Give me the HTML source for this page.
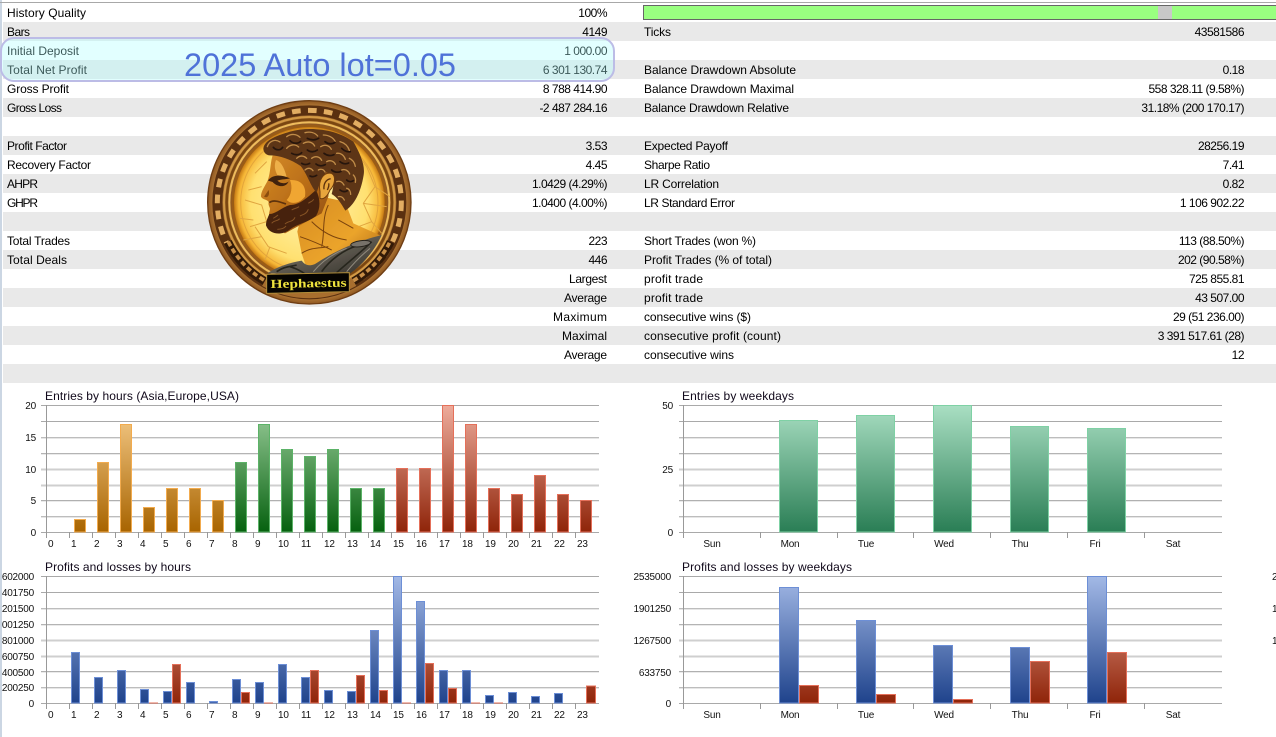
<!DOCTYPE html>
<html><head><meta charset="utf-8"><style>
html,body{margin:0;padding:0;background:#fff;width:1276px;height:737px;overflow:hidden}
svg{display:block}
.t text{font:12px "Liberation Sans",sans-serif;fill:#000}
.t .r{text-anchor:end}
.t .n{text-anchor:end;letter-spacing:-.5px}
.c text{font:10px "Liberation Sans",sans-serif;fill:#111;letter-spacing:-.2px}
.c .y{text-anchor:end}
.c .m{text-anchor:middle}
.c .h{font-size:12px;fill:#10081a;letter-spacing:0}
</style></head><body>
<svg width="1276" height="737" viewBox="0 0 1276 737" xmlns="http://www.w3.org/2000/svg">
<defs>
<linearGradient id="go" gradientUnits="userSpaceOnUse" x1="0" y1="532" x2="0" y2="405"><stop offset="0" stop-color="#a86400"/><stop offset="1" stop-color="#f9cf8e"/></linearGradient>
<linearGradient id="gg" gradientUnits="userSpaceOnUse" x1="0" y1="532" x2="0" y2="405"><stop offset="0" stop-color="#06610f"/><stop offset="1" stop-color="#9dcf9d"/></linearGradient>
<linearGradient id="gr" gradientUnits="userSpaceOnUse" x1="0" y1="532" x2="0" y2="405"><stop offset="0" stop-color="#8f2409"/><stop offset="1" stop-color="#eeac9c"/></linearGradient>
<linearGradient id="gw" gradientUnits="userSpaceOnUse" x1="0" y1="532" x2="0" y2="405"><stop offset="0" stop-color="#2a7e55"/><stop offset="1" stop-color="#aadfc3"/></linearGradient>
<linearGradient id="gb" gradientUnits="userSpaceOnUse" x1="0" y1="703" x2="0" y2="576"><stop offset="0" stop-color="#1f438c"/><stop offset="1" stop-color="#a3b9e6"/></linearGradient>
<linearGradient id="gd" gradientUnits="userSpaceOnUse" x1="0" y1="703" x2="0" y2="576"><stop offset="0" stop-color="#8f2409"/><stop offset="1" stop-color="#eeac9c"/></linearGradient>
<radialGradient id="disc" cx="0.5" cy="0.5" r="0.5"><stop offset="0" stop-color="#fff6b4"/><stop offset=".78" stop-color="#ffe070"/><stop offset=".94" stop-color="#f6b636"/><stop offset="1" stop-color="#c67a14"/></radialGradient>
<radialGradient id="rim" cx="0.5" cy="0.5" r="0.5"><stop offset=".75" stop-color="#8c5520"/><stop offset=".93" stop-color="#b9803c"/><stop offset="1" stop-color="#8f5720"/></radialGradient>
<linearGradient id="skin" x1="0" y1="0" x2="1" y2="1"><stop offset="0" stop-color="#d9902c"/><stop offset=".55" stop-color="#b86c16"/><stop offset="1" stop-color="#8a4a0e"/></linearGradient>
<linearGradient id="neck" x1="0" y1="0" x2="1" y2="1"><stop offset="0" stop-color="#d58a20"/><stop offset=".6" stop-color="#eba42c"/><stop offset="1" stop-color="#a8620f"/></linearGradient>
<linearGradient id="toga" x1="0" y1="0" x2="1" y2="1"><stop offset="0" stop-color="#77726a"/><stop offset=".5" stop-color="#5f5a50"/><stop offset="1" stop-color="#33302a"/></linearGradient>
<filter id="soft" x="-5%" y="-5%" width="110%" height="110%"><feGaussianBlur stdDeviation="1"/></filter>
<g id="grid" fill="none">
<path d="M0 .5H558" stroke="#a9a9a9"/>
<path d="M0 16.5H558" stroke="#a9a9a9"/>
<path d="M0 32.5H558" stroke="#bdbdbd"/><path d="M0 33.5H558" stroke="#e6e6e6"/>
<path d="M0 48.5H558" stroke="#b4b4b4"/><path d="M0 49.5H558" stroke="#eaeaea"/>
<path d="M0 64.5H558" stroke="#cfcfcf" stroke-width="2"/>
<path d="M0 80.5H558" stroke="#cfcfcf" stroke-width="2"/>
<path d="M0 95.5H558" stroke="#b0b0b0"/><path d="M0 96.5H558" stroke="#eaeaea"/>
<path d="M0 111.5H558" stroke="#bdbdbd"/><path d="M0 112.5H558" stroke="#e6e6e6"/>
<path d="M0 127.5H558" stroke="#a9a9a9"/>
</g>
<g id="gridw" fill="none">
<path d="M0 .5H543" stroke="#a9a9a9"/>
<path d="M0 16.5H543" stroke="#a9a9a9"/>
<path d="M0 32.5H543" stroke="#bdbdbd"/><path d="M0 33.5H543" stroke="#e6e6e6"/>
<path d="M0 48.5H543" stroke="#b4b4b4"/><path d="M0 49.5H543" stroke="#eaeaea"/>
<path d="M0 64.5H543" stroke="#cfcfcf" stroke-width="2"/>
<path d="M0 80.5H543" stroke="#cfcfcf" stroke-width="2"/>
<path d="M0 95.5H543" stroke="#b0b0b0"/><path d="M0 96.5H543" stroke="#eaeaea"/>
<path d="M0 111.5H543" stroke="#bdbdbd"/><path d="M0 112.5H543" stroke="#e6e6e6"/>
<path d="M0 127.5H543" stroke="#a9a9a9"/>
</g>
<path id="th" fill="none" stroke="#999" d="M5.5 127v6M28.5 127v6M51.5 127v6M74.5 127v6M97.5 127v6M120.5 127v6M143.5 127v6M166.5 127v6M189.5 127v6M212.5 127v6M235.5 127v6M258.5 127v6M281.5 127v6M304.5 127v6M327.5 127v6M350.5 127v6M373.5 127v6M396.5 127v6M419.5 127v6M442.5 127v6M465.5 127v6M488.5 127v6M511.5 127v6M534.5 127v6M5.5 0V127"/>
<path id="tw" fill="none" stroke="#999" d="M5.5 127v6M82.5 127v6M159.5 127v6M235.5 127v6M312.5 127v6M389.5 127v6M466.5 127v6M5.5 0V127"/>
</defs>

<rect width="1276" height="737" fill="#fff"/>
<g fill="#e9e9e9">
<rect x="3" y="22" width="1273" height="19"/><rect x="3" y="60" width="1273" height="19"/><rect x="3" y="98" width="1273" height="19"/><rect x="3" y="136" width="1273" height="19"/><rect x="3" y="174" width="1273" height="19"/><rect x="3" y="212" width="1273" height="19"/><rect x="3" y="250" width="1273" height="19"/><rect x="3" y="288" width="1273" height="19"/><rect x="3" y="326" width="1273" height="19"/><rect x="3" y="364" width="1273" height="19"/>
</g>
<rect x="0" y="0" width="2" height="737" fill="#cbd6e3"/>
<rect x="0" y="2" width="1276" height="1" fill="#a8a8a8"/>
<rect x="643.500" y="5.500" width="640" height="14" fill="#99ff80" stroke="#666"/>
<rect x="1158" y="6" width="14" height="13" fill="#c8c8c8"/>

<g class="t">
<text x="7" y="17" textLength="79">History Quality</text><text class="n" x="607" y="17">100%</text>
<text x="7" y="36" textLength="23">Bars</text><text class="n" x="607" y="36">4149</text><text x="644" y="36" textLength="27">Ticks</text><text class="n" x="1244" y="36">43581586</text>
<text x="7" y="55" textLength="72">Initial Deposit</text><text class="n" x="607" y="55">1 000.00</text>
<text x="7" y="74" textLength="80">Total Net Profit</text><text class="n" x="607" y="74">6 301 130.74</text><text x="644" y="74" textLength="152">Balance Drawdown Absolute</text><text class="n" x="1244" y="74">0.18</text>
<text x="7" y="93" textLength="62">Gross Profit</text><text class="n" x="607" y="93">8 788 414.90</text><text x="644" y="93" textLength="150">Balance Drawdown Maximal</text><text class="n" x="1244" y="93">558 328.11 (9.58%)</text>
<text x="7" y="112" textLength="55">Gross Loss</text><text class="n" x="607" y="112">-2 487 284.16</text><text x="644" y="112" textLength="145">Balance Drawdown Relative</text><text class="n" x="1244" y="112">31.18% (200 170.17)</text>
<text x="7" y="150" textLength="60">Profit Factor</text><text class="n" x="607" y="150">3.53</text><text x="644" y="150" textLength="84">Expected Payoff</text><text class="n" x="1244" y="150">28256.19</text>
<text x="7" y="169" textLength="84">Recovery Factor</text><text class="n" x="607" y="169">4.45</text><text x="644" y="169" textLength="66">Sharpe Ratio</text><text class="n" x="1244" y="169">7.41</text>
<text x="7" y="188" textLength="31">AHPR</text><text class="n" x="607" y="188">1.0429 (4.29%)</text><text x="644" y="188" textLength="75">LR Correlation</text><text class="n" x="1244" y="188">0.82</text>
<text x="7" y="207" textLength="31">GHPR</text><text class="n" x="607" y="207">1.0400 (4.00%)</text><text x="644" y="207" textLength="91">LR Standard Error</text><text class="n" x="1244" y="207">1 106 902.22</text>
<text x="7" y="245" textLength="63">Total Trades</text><text class="n" x="607" y="245">223</text><text x="644" y="245" textLength="112">Short Trades (won %)</text><text class="n" x="1244" y="245">113 (88.50%)</text>
<text x="7" y="264" textLength="60">Total Deals</text><text class="n" x="607" y="264">446</text><text x="644" y="264" textLength="128">Profit Trades (% of total)</text><text class="n" x="1244" y="264">202 (90.58%)</text>
<text class="r" x="607" y="283" textLength="38">Largest</text><text x="644" y="283" textLength="59">profit trade</text><text class="n" x="1244" y="283">725 855.81</text>
<text class="r" x="607" y="302" textLength="43">Average</text><text x="644" y="302" textLength="59">profit trade</text><text class="n" x="1244" y="302">43 507.00</text>
<text class="r" x="607" y="321" textLength="54">Maximum</text><text x="644" y="321" textLength="107">consecutive wins ($)</text><text class="n" x="1244" y="321">29 (51 236.00)</text>
<text class="r" x="607" y="340" textLength="45">Maximal</text><text x="644" y="340" textLength="137">consecutive profit (count)</text><text class="n" x="1244" y="340">3 391 517.61 (28)</text>
<text class="r" x="607" y="359" textLength="43">Average</text><text x="644" y="359" textLength="90">consecutive wins</text><text class="n" x="1244" y="359">12</text>
</g>

<rect x="1" y="38" width="613" height="43" rx="13" fill="#aaffff" fill-opacity=".34" stroke="#bcbce6" stroke-width="2"/>
<text x="184" y="76" font-family="Liberation Sans, sans-serif" font-size="32" fill="#4f72d8" textLength="272" lengthAdjust="spacingAndGlyphs">2025 Auto lot=0.05</text>

<!-- medallion, drawn in 3x coordinates -->
<g transform="translate(190 90) scale(.33333)">
<circle cx="358" cy="337" r="305" fill="url(#rim)" stroke="#6f3e14" stroke-width="4"/>
<circle cx="358" cy="337" r="276" fill="none" stroke="#5a3010" stroke-width="30"/>
<circle cx="358" cy="337" r="276" fill="none" stroke="#e2ad62" stroke-width="15" stroke-dasharray="26 22"/>
<path d="M225 572A270 270 0 0 0 490 572" fill="none" stroke="#a86e2e" stroke-width="36"/>
<path d="M115 455A270 270 0 0 0 225 572M490 572A270 270 0 0 0 600 455" fill="none" stroke="#331a07" stroke-width="28"/>
<path d="M115 455A270 270 0 0 0 225 572M490 572A270 270 0 0 0 600 455" fill="none" stroke="#c88f48" stroke-width="11" stroke-dasharray="15 9"/>
<circle cx="358" cy="337" r="256" fill="none" stroke="#d39a45" stroke-width="6"/>
<circle cx="358" cy="337" r="248" fill="none" stroke="#7a4610" stroke-width="7"/>
<circle cx="358" cy="337" r="240" fill="none" stroke="#eebc5c" stroke-width="6"/>
<circle cx="358" cy="337" r="233" fill="#9a5c16"/>
<circle cx="358" cy="337" r="226" fill="url(#disc)"/>
<g filter="url(#soft)">
<circle cx="358" cy="337" r="206" fill="none" stroke="#e3a53a" stroke-width="3"/>
<g fill="none" stroke="#e0a540" stroke-width="3">
<path d="M165 330L215 345L230 395L180 410M150 385L190 390M195 410L235 470L290 490M215 440L160 450M240 470L225 510M195 250L230 215M175 300L215 290M530 230L555 290L520 340L545 395L505 410M600 320L555 290M520 340L590 350M545 395L575 430M500 190L530 230"/>
</g>
<!-- neck and shoulder -->
<path d="M350 310L465 335L490 400L575 438L480 470L350 535L335 490L322 425Z" fill="url(#neck)"/>
<path d="M330 440C360 450 395 465 425 480M365 395C395 425 430 445 470 450M415 345C395 385 405 430 395 470M335 490C365 470 395 475 415 470M445 390L490 415" fill="none" stroke="#7a430c" stroke-width="3"/>
<!-- toga -->
<path d="M232 550C262 530 300 518 335 512C345 525 355 530 375 522C410 500 470 462 575 435C555 482 512 530 478 552Z" fill="url(#toga)"/>
<path d="M395 545C420 510 460 480 500 468M440 548C470 520 510 490 545 455M300 530C315 535 330 540 345 552M260 545C280 530 300 530 320 525" fill="none" stroke="#28251f" stroke-width="5"/>
<path d="M370 545C395 515 430 490 470 475M470 545C495 515 515 495 540 475" fill="none" stroke="#918b7e" stroke-width="3"/>
<ellipse cx="512" cy="461" rx="30" ry="9" fill="#77726a" stroke="#26231e" stroke-width="3" transform="rotate(-8 512 461)"/>
<!-- face -->
<path d="M250 190C240 215 243 245 233 272C224 290 212 306 213 320C218 330 232 328 236 336C233 348 243 352 239 362C235 374 240 384 232 396L285 430L395 370L415 320L425 230L310 170Z" fill="url(#skin)"/>
<path d="M258 210C275 215 285 240 290 262L262 255C254 240 252 225 258 210Z" fill="#eeb04a"/>
<path d="M300 270C335 268 350 290 345 320C330 340 305 345 290 330C305 315 308 290 300 270Z" fill="#f0a632"/>
<path d="M234 272C245 255 270 252 300 265C285 268 272 268 262 272C272 282 288 282 296 274C288 294 262 292 248 276Z" fill="#3f2008"/>
<path d="M236 300C240 318 232 325 222 320C228 312 232 305 236 300Z" fill="#8a4e10"/>
<path d="M238 338C250 328 268 335 288 342" fill="none" stroke="#5d3008" stroke-width="5"/>
<!-- beard -->
<path d="M238 372C258 372 275 352 300 345C330 345 352 322 378 300C392 328 392 355 378 378C352 398 322 402 300 418C275 438 238 434 228 406C228 392 234 382 238 372Z" fill="#47240c"/>
<g fill="none" stroke="#875326" stroke-width="3">
<path d="M245 400c8-10 18-6 24-14M285 402c10-10 24-5 30-20M330 378c10-5 20-6 25-20M262 418c10 0 20-2 26-10M305 360c8-6 16-4 22-10M355 340c6-6 12-4 16-12M250 385c6-4 10-6 14-10"/>
</g>
<!-- hair -->
<path d="M220 175C225 148 265 136 300 125C360 108 440 118 490 155C510 190 526 225 521 255C512 310 492 345 466 362C452 338 442 322 425 312C436 272 430 255 410 247C395 256 386 292 380 308C362 290 352 252 332 228C302 208 270 196 240 196C228 196 220 186 220 175Z" fill="#5d3515"/>
<g fill="none" stroke="#c08c48" stroke-width="4" stroke-linecap="round">
<path d="M232 170c6-18 24-24 38-14M290 140c14-10 30-8 40 2M345 128c16-4 30 0 38 10M400 135c16 0 30 8 36 20M450 155c14 4 24 14 28 26"/>
<path d="M290 175c10-12 26-14 36-4M340 160c14-8 28-4 34 8M392 170c12-8 26-4 32 8M440 190c12-2 22 6 26 18M478 205c10 4 16 14 18 24"/>
<path d="M320 205c10-10 22-8 30 0M365 205c10-8 24-6 30 6M410 215c10-6 22-2 26 8M455 240c10-4 20 2 24 12M490 255c6 6 8 14 6 22"/>
<path d="M345 240c8-8 18-6 24 2M385 240c8-4 16-2 20 6M440 275c10-4 18 2 22 10M470 295c8 2 12 10 12 18M445 320c8-2 14 2 18 10"/>
</g>
<g fill="none" stroke="#26120a" stroke-width="5" stroke-linecap="round">
<path d="M250 172c8 10 22 10 28 0M300 152c10 10 24 10 32 2M352 145c12 6 24 6 34 0M405 155c10 8 22 8 30 2M455 175c8 8 16 12 26 10"/>
<path d="M305 190c10 6 22 6 30-2M352 180c10 8 22 6 30 0M402 190c10 8 22 8 30 4M450 215c8 6 18 8 26 4"/>
<path d="M335 220c8 6 16 4 24 0M378 222c10 8 20 6 28 2M425 240c8 8 20 8 28 4M470 270c6 6 14 6 20 2M450 300c8 6 16 6 22 2M360 258c8 4 14 2 20-2"/>
</g>
<!-- ear -->
<path d="M390 305C383 268 402 246 424 250C440 258 434 286 420 300C412 320 400 330 390 325Z" fill="#e8a63c" stroke="#6c3a0c" stroke-width="3"/>
<path d="M402 298c-2-16 6-30 20-32M412 300c4-8 6-14 4-20" fill="none" stroke="#5d300a" stroke-width="4"/>
</g>
<!-- banner -->
<path d="M230 553L478 548L478 605L230 610Z" fill="#060401" stroke="#b08c38" stroke-width="3"/>
<text x="242" y="592" font-family="Liberation Serif, serif" font-weight="bold" font-size="37" fill="#efe33e" textLength="228" lengthAdjust="spacingAndGlyphs" transform="rotate(-1 356 590)">Hephaestus</text>
</g>

<!-- Chart 1 -->
<g class="c">
<use href="#grid" x="41" y="405"/>
<use href="#th" x="41" y="405"/>
<text class="h" x="45" y="400" textLength="194">Entries by hours (Asia,Europe,USA)</text>
<text class="y" x="36" y="409">20</text><text class="y" x="36" y="441">15</text><text class="y" x="36" y="473">10</text><text class="y" x="36" y="504">5</text><text class="y" x="36" y="536">0</text>
<g stroke="#f2ab4e" fill="url(#go)">
<rect x="74.500" y="519.5" width="11" height="12.5"/><rect x="97.500" y="462.5" width="11" height="69.5"/><rect x="120.500" y="424.5" width="11" height="107.5"/><rect x="143.500" y="507.5" width="11" height="24.5"/><rect x="166.500" y="488.5" width="11" height="43.5"/><rect x="189.500" y="488.5" width="11" height="43.5"/><rect x="212.500" y="500.5" width="11" height="31.5"/>
</g>
<g stroke="#5cb368" fill="url(#gg)">
<rect x="235.500" y="462.5" width="11" height="69.5"/><rect x="258.500" y="424.5" width="11" height="107.5"/><rect x="281.500" y="449.5" width="11" height="82.5"/><rect x="304.500" y="456.5" width="11" height="75.5"/><rect x="327.500" y="449.500" width="11" height="82.5"/><rect x="350.500" y="488.5" width="11" height="43.5"/><rect x="373.500" y="488.5" width="11" height="43.5"/>
</g>
<g stroke="#e5705a" fill="url(#gr)">
<rect x="396.500" y="468.5" width="11" height="63.5"/><rect x="419.500" y="468.5" width="11" height="63.5"/><rect x="442.500" y="405.5" width="11" height="126.5"/><rect x="465.500" y="424.5" width="11" height="107.5"/><rect x="488.500" y="488.5" width="11" height="43.5"/><rect x="511.500" y="494.5" width="11" height="37.5"/><rect x="534.500" y="475.5" width="11" height="56.5"/><rect x="557.500" y="494.5" width="11" height="37.5"/><rect x="580.500" y="500.5" width="11" height="31.5"/>
</g>
<g>
<text x="48" y="547">0</text><text x="71" y="547">1</text><text x="94" y="547">2</text><text x="117" y="547">3</text><text x="140" y="547">4</text><text x="163" y="547">5</text><text x="186" y="547">6</text><text x="209" y="547">7</text><text x="232" y="547">8</text><text x="255" y="547">9</text><text x="278" y="547">10</text><text x="301" y="547">11</text><text x="324" y="547">12</text><text x="347" y="547">13</text><text x="370" y="547">14</text><text x="393" y="547">15</text><text x="416" y="547">16</text><text x="439" y="547">17</text><text x="462" y="547">18</text><text x="485" y="547">19</text><text x="508" y="547">20</text><text x="531" y="547">21</text><text x="554" y="547">22</text><text x="577" y="547">23</text>
</g>
</g>

<!-- Chart 2 -->
<g class="c">
<use href="#gridw" x="679" y="405"/>
<use href="#tw" x="678" y="405"/>
<text class="h" x="682" y="400" textLength="112">Entries by weekdays</text>
<text class="y" x="673" y="409">50</text><text class="y" x="673" y="473">25</text><text class="y" x="673" y="536">0</text>
<g stroke="#7fd1a5" fill="url(#gw)">
<rect x="779.500" y="420.5" width="38" height="111.500"/><rect x="856.500" y="415.5" width="38" height="116.500"/><rect x="933.500" y="405.5" width="38" height="126.500"/><rect x="1010.500" y="426.5" width="38" height="105.500"/><rect x="1087.500" y="428.5" width="38" height="103.500"/>
</g>
<text class="m" x="712" y="547">Sun</text><text class="m" x="790" y="547">Mon</text><text class="m" x="866" y="547">Tue</text><text class="m" x="944" y="547">Wed</text><text class="m" x="1020" y="547">Thu</text><text class="m" x="1095" y="547">Fri</text><text class="m" x="1173" y="547">Sat</text>
</g>

<!-- Chart 3 -->
<g class="c">
<use href="#grid" x="41" y="576"/>
<use href="#th" x="41" y="576"/>
<text class="h" x="45" y="571" textLength="146">Profits and losses by hours</text>
<text class="y" x="34" y="580">602000</text><text class="y" x="34" y="596">401750</text><text class="y" x="34" y="612">201500</text><text class="y" x="34" y="628">001250</text><text class="y" x="34" y="644">801000</text><text class="y" x="34" y="660">600750</text><text class="y" x="34" y="676">400500</text><text class="y" x="34" y="691">200250</text><text class="y" x="34" y="707">0</text>
<g stroke="#6d8fd6" fill="url(#gb)">
<rect x="71.500" y="652.5" width="8" height="50.500"/><rect x="94.500" y="677.5" width="8" height="25.500"/><rect x="117.500" y="670.5" width="8" height="32.500"/><rect x="140.500" y="689.5" width="8" height="13.500"/><rect x="163.500" y="691.5" width="8" height="11.500"/><rect x="186.500" y="682.5" width="8" height="20.500"/><rect x="209.500" y="701.5" width="8" height="1.500"/><rect x="232.500" y="679.5" width="8" height="23.500"/><rect x="255.500" y="682.5" width="8" height="20.500"/><rect x="278.500" y="664.5" width="8" height="38.500"/><rect x="301.500" y="677.5" width="8" height="25.500"/><rect x="324.500" y="690.5" width="8" height="12.500"/><rect x="347.500" y="691.5" width="8" height="11.500"/><rect x="370.500" y="630.5" width="8" height="72.500"/><rect x="393.500" y="576.5" width="8" height="126.500"/><rect x="416.500" y="601.5" width="8" height="101.500"/><rect x="439.500" y="670.5" width="8" height="32.500"/><rect x="462.500" y="670.5" width="8" height="32.500"/><rect x="485.500" y="695.5" width="8" height="7.500"/><rect x="508.500" y="692.5" width="8" height="10.500"/><rect x="531.500" y="696.5" width="8" height="6.500"/><rect x="554.500" y="693.5" width="8" height="9.500"/>
</g>
<g stroke="#e5705a" fill="url(#gd)">
<rect x="172.500" y="664.5" width="8" height="38.500"/><rect x="241.500" y="692.5" width="8" height="10.500"/><rect x="310.500" y="670.5" width="8" height="32.500"/><rect x="356.500" y="675.5" width="8" height="27.500"/><rect x="379.500" y="690.5" width="8" height="12.500"/><rect x="425.500" y="663.5" width="8" height="39.500"/><rect x="448.500" y="688.5" width="8" height="14.500"/><rect x="586.500" y="686" width="9" height="17"/>
</g>
<path d="M149 703h9M264 703h9M402 703h9M471 703h9M494 703h9" stroke="#e5705a" fill="none"/>
<text x="48" y="718">0</text><text x="71" y="718">1</text><text x="94" y="718">2</text><text x="117" y="718">3</text><text x="140" y="718">4</text><text x="163" y="718">5</text><text x="186" y="718">6</text><text x="209" y="718">7</text><text x="232" y="718">8</text><text x="255" y="718">9</text><text x="278" y="718">10</text><text x="301" y="718">11</text><text x="324" y="718">12</text><text x="347" y="718">13</text><text x="370" y="718">14</text><text x="393" y="718">15</text><text x="416" y="718">16</text><text x="439" y="718">17</text><text x="462" y="718">18</text><text x="485" y="718">19</text><text x="508" y="718">20</text><text x="531" y="718">21</text><text x="554" y="718">22</text><text x="577" y="718">23</text>
</g>

<!-- Chart 4 -->
<g class="c">
<use href="#gridw" x="679" y="576"/>
<use href="#tw" x="678" y="576"/>
<text class="h" x="682" y="571" textLength="170">Profits and losses by weekdays</text>
<text class="y" x="671" y="580">2535000</text><text class="y" x="671" y="612">1901250</text><text class="y" x="671" y="644">1267500</text><text class="y" x="671" y="676">633750</text><text class="y" x="671" y="707">0</text>
<text x="1272" y="580">2</text><text x="1272" y="612">1</text><text x="1272" y="644">1</text>
<g stroke="#6d8fd6" fill="url(#gb)">
<rect x="779.500" y="587.500" width="19" height="115.500"/><rect x="856.500" y="620.500" width="19" height="82.500"/><rect x="933.500" y="645.500" width="19" height="57.500"/><rect x="1010.500" y="647.500" width="19" height="55.500"/><rect x="1087.500" y="576.500" width="19" height="126.500"/>
</g>
<g stroke="#e5705a" fill="url(#gd)">
<rect x="799.500" y="685.500" width="19" height="17.500"/><rect x="876.500" y="694.500" width="19" height="8.500"/><rect x="953.500" y="699.500" width="19" height="3.500"/><rect x="1030.500" y="661.500" width="19" height="41.500"/><rect x="1107.500" y="652.500" width="19" height="50.500"/>
</g>
<text class="m" x="712" y="718">Sun</text><text class="m" x="790" y="718">Mon</text><text class="m" x="866" y="718">Tue</text><text class="m" x="944" y="718">Wed</text><text class="m" x="1020" y="718">Thu</text><text class="m" x="1095" y="718">Fri</text><text class="m" x="1173" y="718">Sat</text>
</g>
</svg>
</body></html>
